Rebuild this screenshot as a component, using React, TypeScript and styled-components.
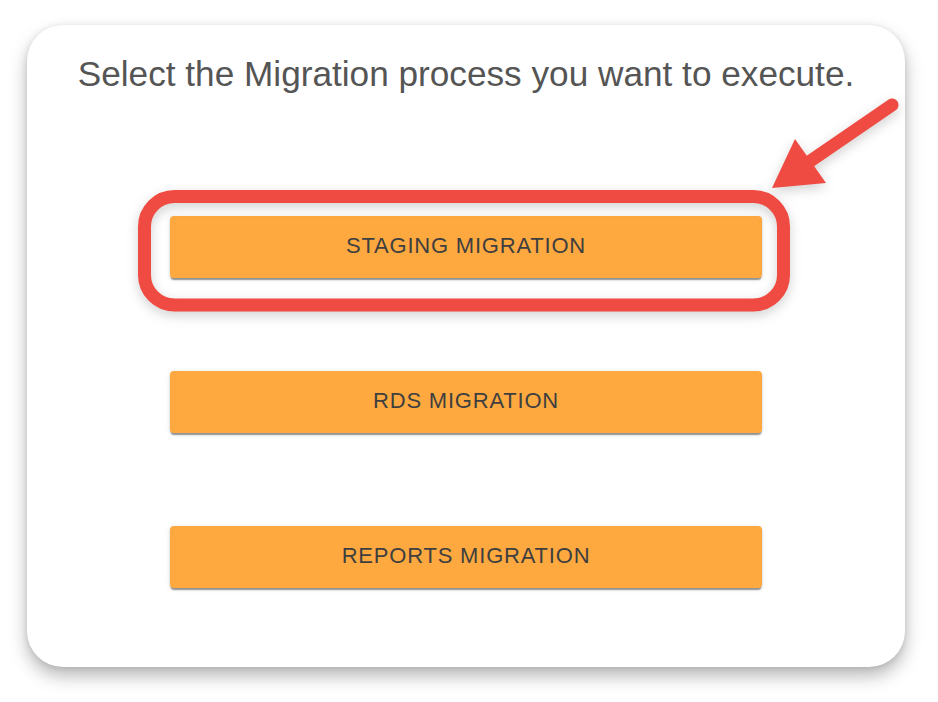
import styled, { createGlobalStyle } from "styled-components";

const GlobalStyle = createGlobalStyle`
  html, body {
    margin: 0;
    padding: 0;
    background: #ffffff;
  }
  body {
    font-family: "Liberation Sans", Arial, sans-serif;
  }
`;

const processes = ["Staging Migration", "RDS Migration", "Reports Migration"];

const App = () => {
  return (
    <>
      <GlobalStyle />
      <Page>
        <Card>
          <Title>Select the Migration process you want to execute.</Title>
          <ButtonList>
            {processes.map((name) => (
              <MigrationButton key={name} type="button">
                {name}
              </MigrationButton>
            ))}
          </ButtonList>
        </Card>
        <Annotation width="938" height="702" viewBox="0 0 938 702">
          <rect
            x="144.5"
            y="196.5"
            width="639"
            height="108.5"
            rx="30"
            fill="none"
            stroke="#ef4b42"
            strokeWidth="13"
          />
          <line
            x1="892"
            y1="105"
            x2="806"
            y2="164"
            stroke="#ef4b42"
            strokeWidth="13"
            strokeLinecap="round"
          />
          <polygon points="772,188 795,139 826,183" fill="#ef4b42" />
        </Annotation>
      </Page>
    </>
  );
};

export default App;

const Page = styled.div`
  position: relative;
  width: 938px;
  height: 702px;
  padding: 25px 0 0 27px;
  box-sizing: border-box;
`;

const Card = styled.section`
  width: 878px;
  height: 642px;
  box-sizing: border-box;
  background: #ffffff;
  border-radius: 36px;
  box-shadow: 0 9px 18px rgba(0, 0, 0, 0.28), 0 1px 6px rgba(0, 0, 0, 0.1);
  padding-top: 29px;
  display: flex;
  flex-direction: column;
  align-items: center;
`;

const Title = styled.h1`
  margin: 0;
  font-family: "Liberation Sans", Arial, sans-serif;
  font-size: 35.2px;
  font-weight: 400;
  line-height: 40px;
  color: #555555;
  white-space: nowrap;
`;

const ButtonList = styled.div`
  margin-top: 122px;
  display: flex;
  flex-direction: column;
  gap: 93px;
`;

const MigrationButton = styled.button`
  width: 592px;
  height: 62px;
  padding: 0 0 2px;
  border: none;
  border-radius: 4px;
  background: #fea940;
  color: #3f3f3f;
  font-family: "Liberation Sans", Arial, sans-serif;
  font-size: 22px;
  letter-spacing: 0.8px;
  text-transform: uppercase;
  box-shadow: 0 3px 1px -1px rgba(0, 0, 0, 0.28), 0 2px 2px 0 rgba(0, 0, 0, 0.14),
    0 1px 5px 0 rgba(0, 0, 0, 0.12);
  cursor: pointer;
`;

const Annotation = styled.svg`
  position: absolute;
  top: 0;
  left: 0;
  pointer-events: none;
  filter: drop-shadow(0 4px 6px rgba(0, 0, 0, 0.18));
`;
